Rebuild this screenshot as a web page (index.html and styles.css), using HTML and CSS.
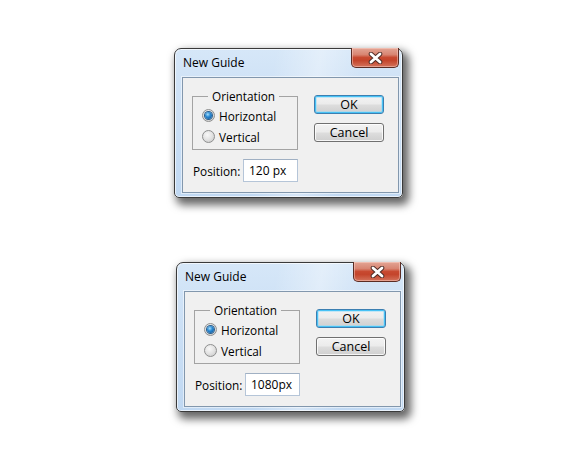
FILE: index.html
```html
<!DOCTYPE html>
<html lang="en">
<head>
    <meta charset="UTF-8">
    <meta name="viewport" content="width=device-width, initial-scale=1.0">
    <title>New Guide</title>

    <link rel="stylesheet" href="styles.css">
</head>
<body>
    <div class="dialog first">
        <div class="titlebar">
            <span class="title">New Guide</span>
            <span class="close">
                <svg width="15" height="12" viewBox="0 0 15 12">
                    <path d="M3 2 L12 10 M12 2 L3 10" stroke="#4b2b25" stroke-width="4.6" stroke-linecap="round"/>
                    <path d="M3 2 L12 10 M12 2 L3 10" stroke="#fff" stroke-width="2.8" stroke-linecap="round"/>
                </svg>
            </span>
        </div>
        <div class="client">
            <div class="left">
                <fieldset class="group">
                    <legend>Orientation</legend>
                    <div class="radio checked"><span class="dot"></span>Horizontal</div>
                    <div class="radio"><span class="dot"></span>Vertical</div>
                </fieldset>
                <div class="position">
                    <span class="label">Position:</span>
                    <span class="field">120 px</span>
                </div>
            </div>
            <div class="buttons">
                <div class="btn default">OK</div>
                <div class="btn">Cancel</div>
            </div>
        </div>
    </div>

    <div class="dialog second">
        <div class="titlebar">
            <span class="title">New Guide</span>
            <span class="close">
                <svg width="15" height="12" viewBox="0 0 15 12">
                    <path d="M3 2 L12 10 M12 2 L3 10" stroke="#4b2b25" stroke-width="4.6" stroke-linecap="round"/>
                    <path d="M3 2 L12 10 M12 2 L3 10" stroke="#fff" stroke-width="2.8" stroke-linecap="round"/>
                </svg>
            </span>
        </div>
        <div class="client">
            <div class="left">
                <fieldset class="group">
                    <legend>Orientation</legend>
                    <div class="radio checked"><span class="dot"></span>Horizontal</div>
                    <div class="radio"><span class="dot"></span>Vertical</div>
                </fieldset>
                <div class="position">
                    <span class="label">Position:</span>
                    <span class="field">1080px</span>
                </div>
            </div>
            <div class="buttons">
                <div class="btn default">OK</div>
                <div class="btn">Cancel</div>
            </div>
        </div>
    </div>
</body>
</html>
```

FILE: styles.css
```css
:root {
    --client: #f0f0f0;
    --text: #000;
}

* {
    margin: 0;
    padding: 0;
    box-sizing: border-box;
}

body {
    width: 570px;
    height: 470px;
    overflow: hidden;
    background: #fff;
    font-family: "Open Sans", "Noto Sans", sans-serif;
    font-size: 11.8px;
    color: var(--text);
    display: flex;
    flex-direction: column;
    padding-top: 48px;
}

.dialog {
    width: 229px;
    height: 150px;
    border: 1px solid #3a3a3a;
    border-radius: 7px 7px 5px 5px;
    background:
        linear-gradient(100deg, rgba(255,255,255,0) 40%, rgba(255,255,255,.35) 58%, rgba(255,255,255,0) 75%),
        linear-gradient(180deg, #d6e7f8 0%, #cfe2f6 25%, #c0d8f2 100%);
    box-shadow: inset 0 0 0 1px rgba(255,255,255,.65), 4px 5px 8px 2px rgba(0,0,0,.6);
    display: flex;
    flex-direction: column;
}

.dialog.first {
    margin-left: 174px;
}
.dialog.second {
    margin-left: 176px;
    margin-top: 64px;
}

.titlebar {
    height: 28px;
    display: flex;
    justify-content: space-between;
    align-items: flex-start;
    padding-left: 8px;
    padding-right: 3px;
}

.title {
    font-size: 12px;
    line-height: 28px;
}

.close {
    width: 48px;
    height: 20px;
    margin-top: -1px;
    border: 1px solid #5b2c24;
    border-top: none;
    border-radius: 0 0 5px 5px;
    background: linear-gradient(180deg, #e3a595 0%, #d88572 35%, #c84a31 50%, #c4442b 65%, #d3735c 100%);
    box-shadow: inset 0 0 0 1px rgba(255,220,210,.45);
    display: flex;
    justify-content: center;
    align-items: center;
}

.client {
    flex: 1;
    margin: 0 3px 4px 7px;
    border: 1px solid #8297ad;
    box-shadow: 0 0 0 1px rgba(255,255,255,.5);
    background: var(--client);
    display: flex;
    padding: 10px 0 0 9px;
}

.left {
    display: flex;
    flex-direction: column;
}

.group {
    width: 106px;
    border: 1px solid #a3a3a3;
    padding: 1px 0 2px 9px;
}

.group legend {
    margin-left: 6px;
    padding: 0 4px;
    line-height: 16px;
}

.radio {
    height: 21px;
    display: flex;
    align-items: center;
    gap: 4px;
}

.dot {
    width: 13px;
    height: 13px;
    border-radius: 50%;
    border: 1px solid #8e8f8f;
    background: radial-gradient(circle at 40% 35%, #f8f8f8 0%, #e2e2e2 50%, #c4c4c4 100%);
    display: flex;
    justify-content: center;
    align-items: center;
}

.radio.checked .dot::after {
    content: "";
    width: 7px;
    height: 7px;
    border-radius: 50%;
    background: radial-gradient(circle at 40% 35%, #a9e0fb 0%, #2a8ad4 40%, #0d4d8c 100%);
    box-shadow: 0 0 0 1px #2a5e8c;
}

.position {
    display: flex;
    align-items: center;
    margin-top: 9px;
    padding-left: 1px;
}

.position .label {
    width: 50px;
}

.field {
    width: 55px;
    height: 23px;
    background: #fff;
    border: 1px solid #b5c5d8;
    border-top-color: #a0b0c3;
    padding-left: 5px;
    line-height: 21px;
    font-size: 12px;
}

.buttons {
    display: flex;
    flex-direction: column;
    gap: 9px;
    margin-left: 16px;
    padding-top: 7px;
}

.btn {
    width: 70px;
    height: 19px;
    border: 1px solid #707070;
    border-radius: 3px;
    background: linear-gradient(180deg, #f3f3f3 0%, #ebebeb 48%, #dddddd 52%, #cfcfcf 100%);
    box-shadow: inset 0 0 0 1px rgba(255,255,255,.8);
    text-align: center;
    line-height: 17px;
    font-size: 12.5px;
}

.btn.default {
    border-color: #3c7fb1;
    box-shadow: inset 0 0 0 1px #48c2f5, inset 0 0 0 2px rgba(150,220,250,.5);
}
```
